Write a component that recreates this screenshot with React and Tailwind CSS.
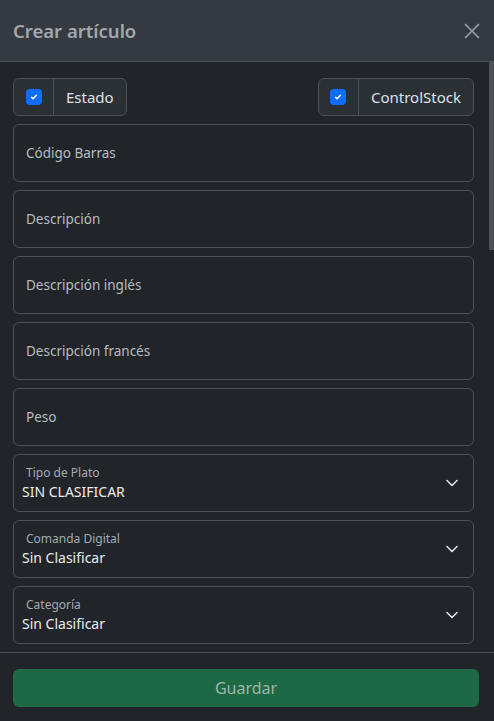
import React from "react";

const font = { fontFamily: '"Noto Sans", "Segoe UI", sans-serif' };

const CheckBox = () => (
  <span className="w-4 h-4 rounded-[4px] bg-[#0d6efd] flex items-center justify-center">
    <svg width="10" height="10" viewBox="0 0 20 20" fill="none">
      <path d="M5 10.5l3 3 7-7" stroke="#fff" strokeWidth="3" strokeLinecap="round" strokeLinejoin="round" />
    </svg>
  </span>
);

const CheckGroup = ({ label }) => (
  <div className="flex h-[38px] border border-[#495057] rounded-[6px] overflow-hidden bg-[#2b3035]">
    <div className="w-[40px] flex items-center justify-center border-r border-[#495057]">
      <CheckBox />
    </div>
    <div className="px-3 flex items-center text-[15px] text-[#dee2e6]">{label}</div>
  </div>
);

const TextField = ({ label }) => (
  <div className="h-[58px] border border-[#495057] rounded-[6px] bg-[#212529] flex items-center px-3 text-[13.5px] text-[#b6bcc2]">
    {label}
  </div>
);

const SelectField = ({ label, value }) => (
  <div className="h-[58px] border border-[#495057] rounded-[6px] bg-[#212529] flex items-center pr-[15px]">
    <div className="flex-1 flex flex-col pl-2">
      <span className="pl-1 text-[12px] leading-[16px] text-[#a4aab0]">{label}</span>
      <span className="text-[14px] leading-[20px] mt-[1px] text-[#e9ecef]">{value}</span>
    </div>
    <svg width="12" height="8" viewBox="0 0 12 8" fill="none">
      <path d="M1 1.5l5 5 5-5" stroke="#dee2e6" strokeWidth="1.6" strokeLinecap="round" strokeLinejoin="round" />
    </svg>
  </div>
);

export default function App() {
  return (
    <div style={font} className="w-[494px] h-[721px] bg-[#212529] flex flex-col overflow-hidden">
      <div className="h-[62px] shrink-0 bg-[#343a40] border-b border-[#495057] flex items-center justify-between pl-[13px] pr-[14px]">
        <h5 className="text-[18.5px] font-semibold text-[#a3a8ae]">Crear artículo</h5>
        <svg width="16" height="16" viewBox="0 0 16 16" fill="none">
          <path d="M1 1l14 14M15 1L1 15" stroke="#9ca1a7" strokeWidth="1.6" />
        </svg>
      </div>

      <div className="relative h-[590px] shrink-0 overflow-hidden">
        <div className="pl-[13px] pr-[20px] pt-[16px] flex flex-col gap-2">
          <div className="flex justify-between">
            <CheckGroup label="Estado" />
            <CheckGroup label="ControlStock" />
          </div>
          <TextField label="Código Barras" />
          <TextField label="Descripción" />
          <TextField label="Descripción inglés" />
          <TextField label="Descripción francés" />
          <TextField label="Peso" />
          <SelectField label="Tipo de Plato" value="SIN CLASIFICAR" />
          <SelectField label="Comanda Digital" value="Sin Clasificar" />
          <SelectField label="Categoría" value="Sin Clasificar" />
        </div>
        <div className="absolute right-0 top-0 w-[5px] h-[188px] bg-[#4d5259]" />
      </div>

      <div className="flex-1 border-t border-[#495057] pt-[16px] pl-[13px] pr-[15px]">
        <button className="w-full h-[38px] rounded-[6px] bg-[#1d6946] text-[16px] text-[#9fb5a9]">
          Guardar
        </button>
      </div>
    </div>
  );
}
